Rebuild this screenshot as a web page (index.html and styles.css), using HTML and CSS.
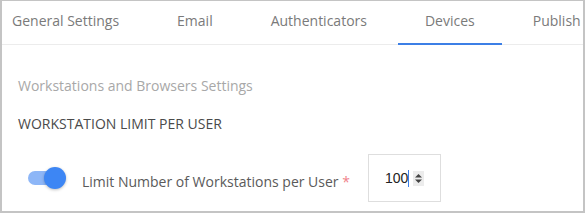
FILE: index.html
```html
<!DOCTYPE html>
<html lang="en">
<head>
    <meta charset="UTF-8">
    <meta name="viewport" content="width=device-width, initial-scale=1.0">
    <title>Settings</title>
    <link rel="stylesheet" href="styles.css">
</head>
<body>
    <div class="panel">
        <div class="tabs">
            <div class="tab first">General Settings</div>
            <div class="tab">Email</div>
            <div class="tab">Authenticators</div>
            <div class="tab active">Devices</div>
            <div class="tab">Publish</div>
        </div>

        <div class="content">
            <div class="section-title">Workstations and Browsers Settings</div>
            <div class="group-title">WORKSTATION LIMIT PER USER</div>

            <div class="row">
                <div class="toggle">
                    <div class="track"></div>
                    <div class="thumb"></div>
                </div>
                <div class="label">Limit Number of Workstations per User <span class="req">*</span></div>
                <div class="number">
                    <span class="value">100</span><span class="caret"></span>
                    <span class="spin">
                        <svg width="11" height="15" viewBox="0 0 11 15">
                            <path d="M5.5 3 L9 6.5 H2 Z" fill="#444"/>
                            <path d="M5.5 12 L9 8.5 H2 Z" fill="#444"/>
                        </svg>
                    </span>
                </div>
            </div>
        </div>
    </div>
</body>
</html>
```

FILE: styles.css
```css
body {
    margin: 0;
    font-family: "Open Sans", sans-serif;
    background: #fff;
}

.panel {
    width: 585px;
    height: 213px;
    box-sizing: border-box;
    border: 2px solid #c4c4c4;
    border-top-width: 1px;
    overflow: hidden;
}

.tabs {
    display: flex;
    height: 43px;
    border-bottom: 1px solid #ececec;
    white-space: nowrap;
}

.tab {
    padding: 0 29px;
    font-size: 14px;
    color: #7a7a7a;
    line-height: 40px;
    flex-shrink: 0;
    border-bottom: 2px solid transparent;
    margin-bottom: -1px;
}

.tab.first {
    margin-left: -19px;
}

.tab.active {
    border-bottom-color: #3c7fe6;
    padding: 0 27px;
    margin: 0 2px -1px;
}

.content {
    padding: 31px 16px 0;
}

.section-title {
    font-size: 14px;
    color: #a8a8a8;
    line-height: 20px;
}

.group-title {
    font-size: 14px;
    color: #4a4a4a;
    line-height: 20px;
    margin-top: 18px;
}

.row {
    display: flex;
    align-items: center;
    margin-top: 20px;
}

.toggle {
    position: relative;
    width: 38px;
    height: 22px;
    margin-left: 10px;
}

.track {
    position: absolute;
    left: 0;
    top: 4px;
    width: 34px;
    height: 14px;
    border-radius: 7px;
    background: #8db6f7;
}

.thumb {
    position: absolute;
    left: 16px;
    top: 0;
    width: 22px;
    height: 22px;
    border-radius: 50%;
    background: #3d86f4;
    box-shadow: 0 1px 3px rgba(0, 0, 0, 0.25);
}

.label {
    margin-left: 16px;
    font-size: 14px;
    color: #5a5a5a;
    padding-top: 6px;
}

.req {
    color: #f07f8a;
}

.number {
    margin-left: 18px;
    width: 73px;
    height: 48px;
    box-sizing: border-box;
    border: 1px solid #dedede;
    display: flex;
    align-items: center;
    padding-left: 16px;
    font-family: "Liberation Sans", Arial, sans-serif;
    font-size: 14px;
    color: #222;
}

.caret {
    width: 1px;
    height: 17px;
    background: #3c7fe6;
}

.spin {
    margin-left: 4px;
    background: #ececec;
    display: flex;
}
```
